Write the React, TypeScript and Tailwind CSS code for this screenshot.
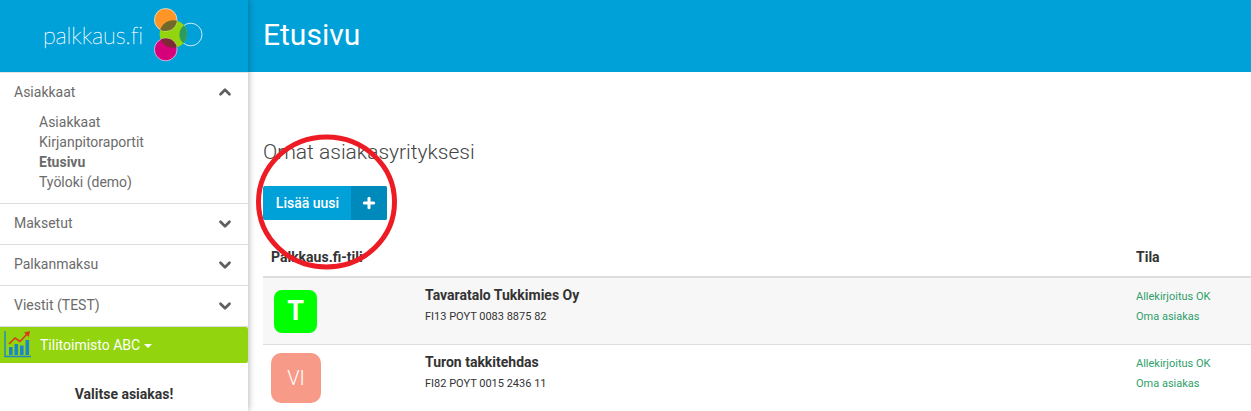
import React from 'react';
import { ChevronDown, ChevronUp, Plus } from 'lucide-react';

const subItems = [
  { label: 'Asiakkaat', active: false },
  { label: 'Kirjanpitoraportit', active: false },
  { label: 'Etusivu', active: true },
  { label: 'Työloki (demo)', active: false },
];

const closedItems = ['Maksetut', 'Palkanmaksu', 'Viestit (TEST)'];

const rows = [
  {
    name: 'Tavaratalo Tukkimies Oy',
    iban: 'FI13 POYT 0083 8875 82',
    letter: 'T',
    avatar: 'ml-[11px] mt-[12px] w-[43px] h-[43px] bg-[#00ff00] font-bold text-[27px] rounded-[8px]',
    rowClass: 'h-[67px] bg-[#f7f7f7] border-b border-[#dddddd]',
  },
  {
    name: 'Turon takkitehdas',
    iban: 'FI82 POYT 0015 2436 11',
    letter: 'VI',
    avatar: 'ml-[8px] mt-[8px] w-[50px] h-[50px] bg-[#f79a87] font-light text-[20px] rounded-[10px]',
    rowClass: 'h-[66px]',
  },
];

const Logo = () => (
  <svg width="50" height="54" viewBox="0 0 50 54" className="mb-[2px] ml-[11px] shrink-0">
    <defs>
      <clipPath id="green-clip">
        <circle cx="19.3" cy="26" r="13.7" />
      </clipPath>
    </defs>
    <circle cx="36.7" cy="26.5" r="11.3" fill="none" stroke="#fff" strokeWidth="0.8" />
    <circle cx="19.3" cy="26" r="13.7" fill="#92d50f" />
    <circle cx="11.7" cy="11.8" r="11.3" fill="#fd9627" stroke="#fff" strokeWidth="0.6" />
    <circle cx="11.7" cy="41.5" r="11.3" fill="#d5007a" stroke="#fff" strokeWidth="0.6" />
    <g clipPath="url(#green-clip)">
      <circle cx="11.7" cy="11.8" r="11.3" fill="#6f6a2a" />
      <circle cx="11.7" cy="41.5" r="11.3" fill="#7c2a35" />
      <circle cx="36.7" cy="26.5" r="11.3" fill="#2e9a5c" />
    </g>
  </svg>
);

const ChartIcon = () => (
  <svg width="28" height="28" viewBox="0 0 28 28" className="absolute left-[4px] top-[3px]">
    <path d="M1 1 V26.5 H27" fill="none" stroke="#1b87c9" strokeWidth="1.4" />
    <rect x="5" y="17" width="3.6" height="8" fill="#1b87c9" />
    <rect x="10.5" y="14" width="3.6" height="11" fill="#1b87c9" />
    <rect x="16" y="15.5" width="3.6" height="9.5" fill="#1b87c9" />
    <rect x="21.5" y="10" width="3.6" height="15" fill="#1b87c9" />
    <path d="M5 14 L11 8 L16 11.5 L23.5 3.5" fill="none" stroke="#d93a1e" strokeWidth="1.6" />
    <path d="M20 2.5 L26 1 L24.8 7 Z" fill="#d93a1e" />
  </svg>
);

const App: React.FC = () => {
  return (
    <div className="relative flex h-[411px] w-[1251px] overflow-hidden bg-white font-['Roboto',sans-serif] text-[14px]">
      {/* Sidebar */}
      <aside className="relative z-10 w-[248px] shrink-0 bg-white shadow-[0_0_7px_rgba(0,0,0,0.35)]">
        <div className="box-content flex h-[72px] items-center border-b border-[#e4e4e4] bg-[#00a0d8] pl-[43px]">
          <span className="w-[100px] shrink-0 font-['Lato',sans-serif] text-[23.5px] font-thin leading-none tracking-[-0.15px] text-white [-webkit-text-stroke:0.3px_white]">palkkaus.fi</span>
          <Logo />
        </div>

        <div className="h-[131px] border-b border-[#dddddd] pt-[9px]">
          <div className="flex h-[20px] items-center justify-between pl-[14px] pr-[14px] text-[#6b6b6b]">
            <span>Asiakkaat</span>
            <ChevronUp size={18} strokeWidth={3.6} className="text-[#5f5f5f]" />
          </div>
          <ul className="mt-[10px] pl-[39px] leading-[20px] text-[#6b6b6b]">
            {subItems.map((item) => (
              <li key={item.label} className={item.active ? 'font-bold' : ''}>
                {item.label}
              </li>
            ))}
          </ul>
        </div>

        {closedItems.map((label) => (
          <div
            key={label}
            className="flex h-[41px] items-center justify-between border-b border-[#dddddd] pb-[1px] pl-[14px] pr-[14px] text-[#6b6b6b]"
          >
            <span>{label}</span>
            <ChevronDown size={18} strokeWidth={3.6} className="text-[#5f5f5f]" />
          </div>
        ))}

        <div className="relative flex h-[36px] items-center rounded-r-[2px] bg-[#92d50f] pl-[40px] text-white">
          <ChartIcon />
          <span>Tilitoimisto ABC</span>
          <span className="ml-[4px] mt-[1px] h-0 w-0 border-x-[4px] border-t-[4px] border-x-transparent border-t-white" />
        </div>

        <div className="mt-[21px] text-center font-bold text-[#333333]">Valitse asiakas!</div>
      </aside>

      {/* Main */}
      <main className="min-w-0 flex-1">
        <header className="flex h-[72px] items-center bg-[#00a0d8] pb-[3px] pl-[15px] text-[30px] leading-none text-white">
          Etusivu
        </header>

        <div className="pl-[15px]">
          <h2 className="mt-[69px] text-[21px] font-light leading-[22px] text-[#444444]">Omat asiakasyrityksesi</h2>

          <button className="mt-[23px] flex h-[34px] w-[124px] overflow-hidden rounded-[2px] bg-[#00a0d8] text-[14px] font-medium text-white">
            <span className="flex h-full w-[88px] items-center justify-center pl-[1px]">Lisää uusi</span>
            <span className="flex h-full w-[36px] items-center justify-center bg-[#0089bb]">
              <Plus size={16} strokeWidth={4.5} />
            </span>
          </button>

          <div className="mt-[27px] flex h-[31px] items-start border-b-2 border-[#dddddd] font-bold leading-[20px] text-[#333333]">
            <span className="ml-[8px] w-[865px]">Palkkaus.fi-tili</span>
            <span>Tila</span>
          </div>

          {rows.map((row) => (
            <div key={row.name} className={`flex ${row.rowClass}`}>
              <div className="w-[162px] shrink-0">
                <div className={`flex items-center justify-center text-white ${row.avatar}`}>{row.letter}</div>
              </div>
              <div className="w-[711px] shrink-0 pt-[7px]">
                <div className="font-bold leading-[20px] text-[#333333]">{row.name}</div>
                <div className="mt-[2px] text-[11px] leading-[20px] text-[#333333]">{row.iban}</div>
              </div>
              <div className="pt-[9px] text-[11px] leading-[20px] text-[#2f9e6b]">
                <div>Allekirjoitus OK</div>
                <div>Oma asiakas</div>
              </div>
            </div>
          ))}
        </div>
      </main>

      {/* Red annotation drawn over the screenshot */}
      <svg className="pointer-events-none absolute left-[254px] top-[132px] z-20" width="146" height="142" viewBox="0 0 146 142">
        <ellipse cx="72.5" cy="70" rx="68" ry="65" fill="none" stroke="#ed1c24" strokeWidth="5" />
      </svg>
    </div>
  );
};

export default App;
